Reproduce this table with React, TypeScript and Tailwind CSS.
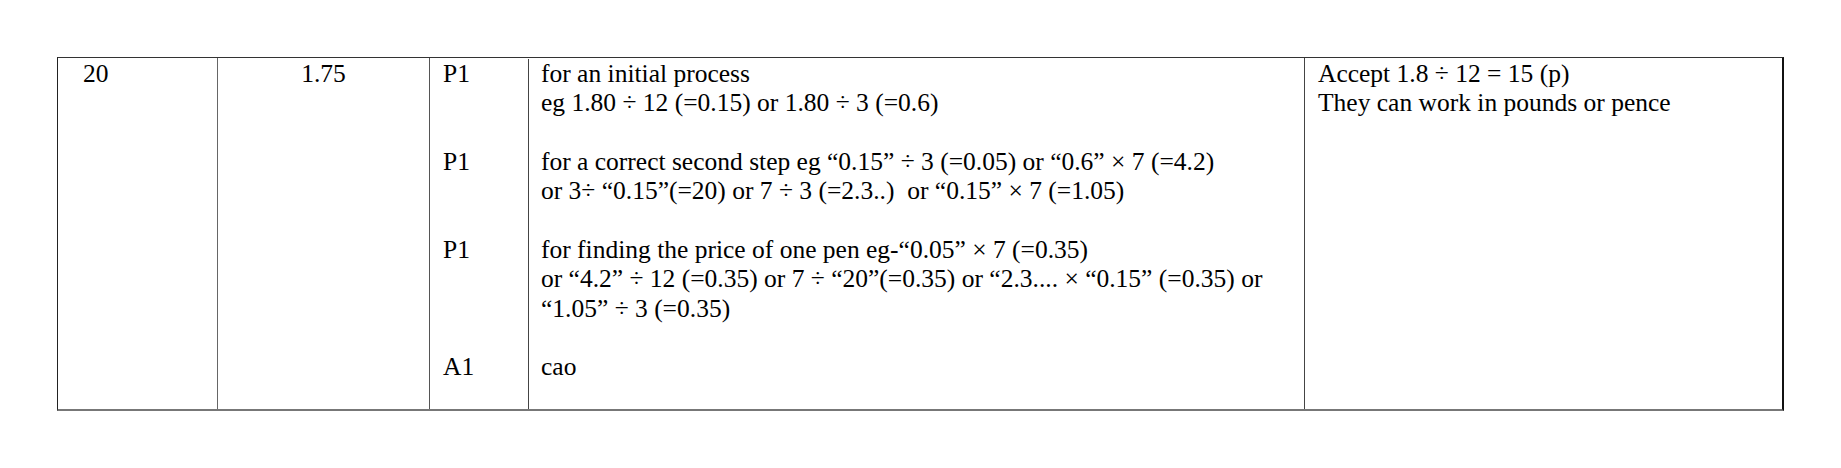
export default function App() {
  const blocks = [
    {
      mark: "P1",
      lines: ["for an initial process", "eg 1.80 ÷ 12 (=0.15) or 1.80 ÷ 3 (=0.6)"],
    },
    {
      mark: "P1",
      lines: [
        "for a correct second step eg “0.15” ÷ 3 (=0.05) or “0.6” × 7 (=4.2)",
        "or 3÷ “0.15”(=20) or 7 ÷ 3 (=2.3..)  or “0.15” × 7 (=1.05)",
      ],
    },
    {
      mark: "P1",
      lines: [
        "for finding the price of one pen eg-“0.05” × 7 (=0.35)",
        "or “4.2” ÷ 12 (=0.35) or 7 ÷ “20”(=0.35) or “2.3.... × “0.15” (=0.35) or",
        "“1.05” ÷ 3 (=0.35)",
      ],
    },
    { mark: "A1", lines: ["cao"] },
  ];

  return (
    <div className="bg-white w-[1841px] h-[468px] pt-[57px] pl-[57px] font-['Liberation_Serif',serif] text-[25.5px] leading-[29.35px] text-black">
      <div className="flex w-[1727px] h-[354px] border-t border-l border-t-[#333] border-l-[#222] border-r-2 border-r-[#111] border-b-2 border-b-[#777]">
        {/* question number */}
        <div className="w-[160px] border-r border-[#666] pl-[25px] pt-[1px]">20</div>

        {/* answer */}
        <div className="w-[212px] border-r border-[#555] pt-[1px] text-center">1.75</div>

        {/* mark + mark scheme */}
        <div className="w-[875px] flex flex-col border-r border-[#444] pt-[1px] overflow-hidden">
          {blocks.map((b, i) => {
            const last = i === blocks.length - 1;
            return (
              <div key={i} className={last ? "flex flex-1" : "flex"}>
                <div className="w-[98px] pl-[13px]">{b.mark}</div>
                <div className={last ? "flex-1 border-l border-[#444] pl-[12px]" : "flex-1 border-l border-[#444] pl-[12px] pb-[29.35px]"}>
                  {b.lines.map((l, j) => (
                    <div key={j} className="whitespace-pre">
                      {l}
                    </div>
                  ))}
                </div>
              </div>
            );
          })}
        </div>

        {/* notes */}
        <div className="flex-1 pl-[13px] pt-[1px]">
          <div>Accept 1.8 ÷ 12 = 15 (p)</div>
          <div>They can work in pounds or pence</div>
        </div>
      </div>
    </div>
  );
}
